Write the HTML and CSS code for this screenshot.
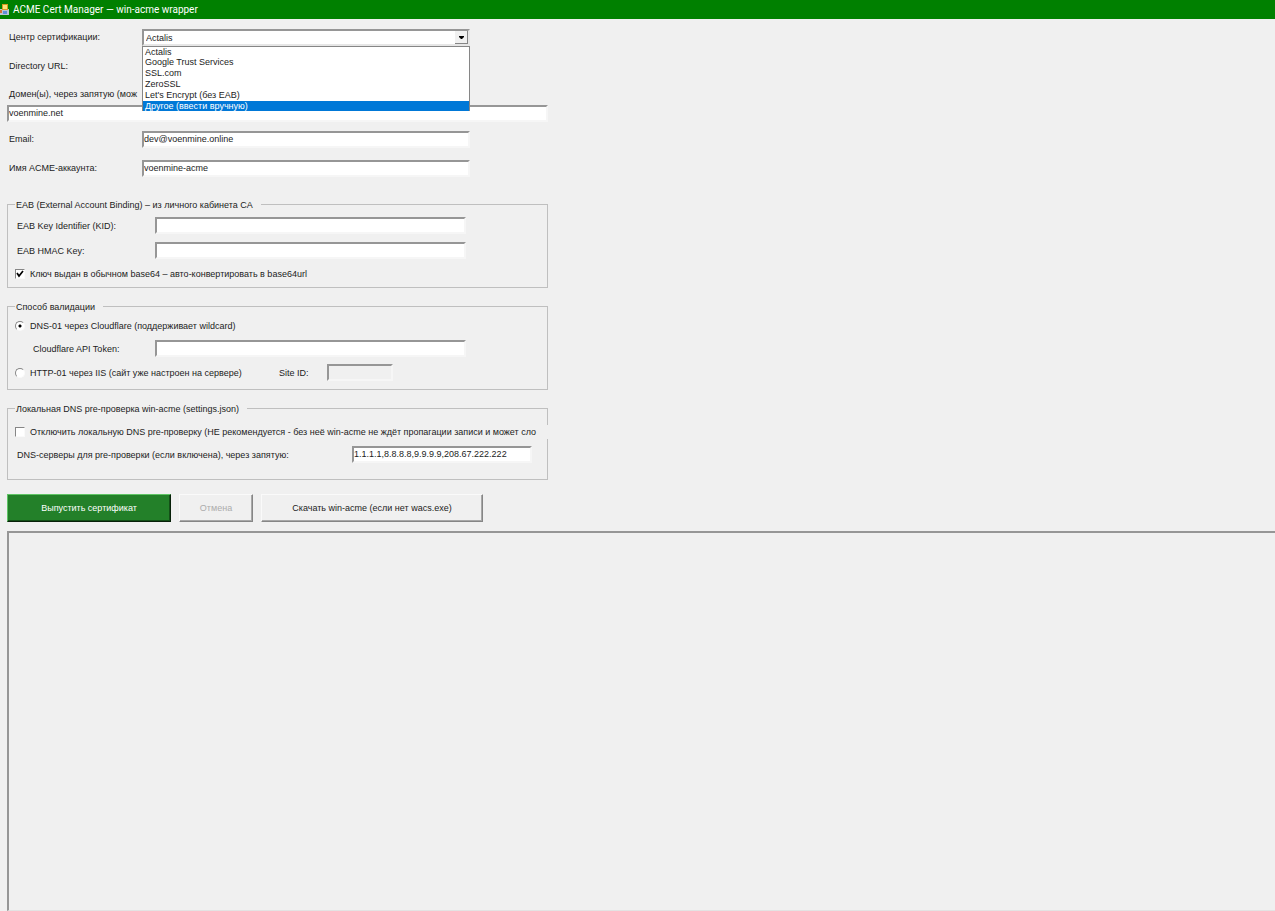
FILE: index.html
```html
<!DOCTYPE html>
<html lang="ru">
<head>
    <meta charset="UTF-8">
    <meta name="viewport" content="width=device-width, initial-scale=1.0">
    <link rel="stylesheet" href="styles.css">
    <title>ACME Cert Manager — win-acme wrapper</title>
</head>
<body>
    <header class="titlebar">
        <svg class="app-icon" width="9" height="12" viewBox="0 0 9 12">
            <rect x="0" y="5" width="9" height="6" fill="#b9c4d4"/>
            <rect x="0" y="6" width="2" height="3" fill="#d2703a"/>
            <rect x="2" y="0" width="6" height="6" fill="#d99a20"/>
            <rect x="3" y="1" width="4" height="4" fill="#ffe27a"/>
            <rect x="3" y="7" width="4" height="3" fill="#5f8fd8"/>
        </svg>
        <h1>ACME Cert Manager — win-acme wrapper</h1>
    </header>

    <form class="form">
        <div class="row">
            <label for="ca">Центр сертификации:</label>
            <div class="combo">
                <select id="ca">
                    <option>Actalis</option>
                    <option>Google Trust Services</option>
                    <option>SSL.com</option>
                    <option>ZeroSSL</option>
                    <option>Let's Encrypt (без EAB)</option>
                    <option>Другое (ввести вручную)</option>
                </select>
                <span class="arrow"><svg width="5" height="3" viewBox="0 0 5 3"><path d="M0 0h5v1L3 3H2L0 1z"/></svg></span>
                <ul class="list" role="listbox" aria-label="Центр сертификации">
                    <li role="option">Actalis</li>
                    <li role="option">Google Trust Services</li>
                    <li role="option">SSL.com</li>
                    <li role="option">ZeroSSL</li>
                    <li role="option">Let's Encrypt (без EAB)</li>
                    <li role="option" class="active" aria-selected="true">Другое (ввести вручную)</li>
                </ul>
            </div>
        </div>
        <div class="row">
            <label for="url">Directory URL:</label>
            <input type="text" id="url">
        </div>
        <div class="domains">
            <label for="domains">Домен(ы), через запятую (мож</label>
            <input type="text" id="domains" value="voenmine.net">
        </div>
        <div class="row">
            <label for="email">Email:</label>
            <input type="text" id="email" value="dev@voenmine.online">
        </div>
        <div class="row">
            <label for="account">Имя ACME-аккаунта:</label>
            <input type="text" id="account" value="voenmine-acme">
        </div>

        <fieldset class="eab">
            <legend>EAB (External Account Binding) – из личного кабинета CA</legend>
            <div class="field">
                <label for="kid">EAB Key Identifier (KID):</label>
                <input type="text" id="kid">
            </div>
            <div class="field">
                <label for="hmac">EAB HMAC Key:</label>
                <input type="text" id="hmac">
            </div>
            <label class="check"><input type="checkbox" checked>Ключ выдан в обычном base64 – авто-конвертировать в base64url</label>
        </fieldset>

        <fieldset class="validation">
            <legend>Способ валидации</legend>
            <label class="check"><input type="radio" name="method" checked>DNS-01 через Cloudflare (поддерживает wildcard)</label>
            <div class="field token">
                <label for="token">Cloudflare API Token:</label>
                <input type="text" id="token">
            </div>
            <div class="http">
                <label class="check"><input type="radio" name="method">HTTP-01 через IIS (сайт уже настроен на сервере)</label>
                <label for="site">Site ID:</label>
                <input type="text" id="site" disabled>
            </div>
        </fieldset>

        <fieldset class="dns">
            <legend>Локальная DNS pre-проверка win-acme (settings.json)</legend>
            <label class="check long"><input type="checkbox">Отключить локальную DNS pre-проверку (НЕ рекомендуется - без неё win-acme не ждёт пропагации записи и может сло</label>
            <div class="field servers">
                <label for="servers">DNS-серверы для pre-проверки (если включена), через запятую:</label>
                <input type="text" id="servers" value="1.1.1.1,8.8.8.8,9.9.9.9,208.67.222.222">
            </div>
        </fieldset>

        <div class="buttons">
            <button type="button" class="issue">Выпустить сертификат</button>
            <button type="button" class="cancel" disabled>Отмена</button>
            <button type="button" class="download">Скачать win-acme (если нет wacs.exe)</button>
        </div>
    </form>

    <textarea class="log" aria-label="Журнал" readonly></textarea>
</body>
</html>
```
FILE: styles.css
```css
*{box-sizing: border-box;}
body{margin: 0;min-height: 100vh;display: flex;flex-direction: column;overflow: hidden;background: #f0f0f0;color: #1c1c1c;font: 9px/12px "Liberation Sans", Arial, sans-serif;}
input,select,button,textarea{font: inherit;color: inherit;margin: 0;border-radius: 0;}
label{white-space: nowrap;}

.titlebar{height: 19px;display: flex;align-items: center;gap: 4px;background: #008000;color: white;}
.titlebar h1{margin: 0;font: 10px/14px Roboto, "Open Sans", sans-serif;}

.form{max-width: 548px;padding: 10px 0 0 7px;}
.row{display: grid;grid-template-columns: 133px 328px;align-items: center;height: 17px;margin-bottom: 12px;padding-left: 2px;}
.row label{padding-bottom: 1px;}
input[type=text]{width: 100%;height: 17px;padding: 0 1px 1px 0;background: white;border: 2px solid;border-color: #969696 #f6f6f6 #f6f6f6 #969696;outline: none;}
input[type=text]:disabled{background: #f0f0f0;}

.combo{position: relative;height: 17px;}
.combo select{width: 100%;height: 17px;padding: 0 2px;appearance: none;background: white;border: 2px solid;border-color: #969696 #e6e6e6 #e6e6e6 #969696;outline: none;}
.arrow{position: absolute;top: 2px;right: 2px;width: 13px;height: 13px;display: flex;align-items: center;justify-content: center;background: #f0f0f0;border-right: 1px solid #868686;border-bottom: 1px solid #868686;pointer-events: none;}
.list{position: absolute;z-index: 1;top: 17px;left: 0;width: 100%;margin: 0;padding: 0;list-style: none;background: white;border: 1px solid #868686;border-bottom: 0;line-height: 11px;}
.list li{padding-left: 2px;height: 11px;white-space: nowrap;}
.list li:first-child{height: 10px;}
.list .active{height: 10px;line-height: 10px;background: #0078d7;color: white;}

.domains{margin-bottom: 9px;}
.domains label{display: block;height: 18px;padding: 1px 2px;}
.domains input{display: block;}

fieldset{min-width: 0;margin: 0;padding: 0 0 0 7px;border: 1px solid #bfbfbf;}
legend{height: 14px;margin-bottom: 6px;padding: 2px 8px 0 1px;}
.eab{margin-top: 20px;height: 91px;}
.validation{margin-top: 11px;height: 91px;}
.dns{margin-top: 11px;height: 79px;}
.field{display: grid;grid-template-columns: 138px 311px;align-items: center;padding-left: 2px;margin-bottom: 8px;}
.check{display: flex;align-items: center;gap: 5px;height: 14px;}
.token{grid-template-columns: 122px 311px;margin: 7px 0;padding-left: 18px;}
.http{display: grid;grid-template-columns: 264px 48px 66px;align-items: center;}
.long{position: relative;margin: 4px -2px 0 0;overflow: hidden;background: #f0f0f0;}
.servers{grid-template-columns: 335px 180px;margin-top: 7px;}

input[type=checkbox],input[type=radio]{appearance: none;flex: none;width: 10px;height: 10px;background: white;border: 1px solid;border-color: #868686 #fafafa #fafafa #868686;}
input[type=radio]{border-radius: 50%;}
input[type=radio]:checked{background: radial-gradient(circle, black 1px, white 2px);}
input[type=checkbox]:checked{background: white url("data:image/svg+xml,%3Csvg xmlns='http://www.w3.org/2000/svg' viewBox='0 0 8 8'%3E%3Cpath d='M1 3l2 3 4-5' fill='none' stroke='black' stroke-width='1.700'/%3E%3C/svg%3E") center / 8px no-repeat;}

.buttons{display: flex;gap: 8px;margin-top: 14px;}
button{height: 28px;padding: 0;background: #f0f0f0;border: 1px solid;border-color: #fafafa #868686 #868686 #fafafa;box-shadow: inset -1px -1px #a8a8a8;}
.issue{width: 164px;background: #238029;color: white;border-color: #5fc465 #082009 #082009 #5fc465;box-shadow: inset -1px -1px #145018;}
.cancel{width: 74px;color: #acacac;}
.download{width: 222px;}

.log{flex: 1;display: block;margin: 9px 0 0 7px;padding: 2px;background: #f0f0f0;border: 2px solid;border-color: #969696 transparent #e3e3e3 #969696;border-right: 0;border-bottom-width: 1px;resize: none;outline: none;}
```
